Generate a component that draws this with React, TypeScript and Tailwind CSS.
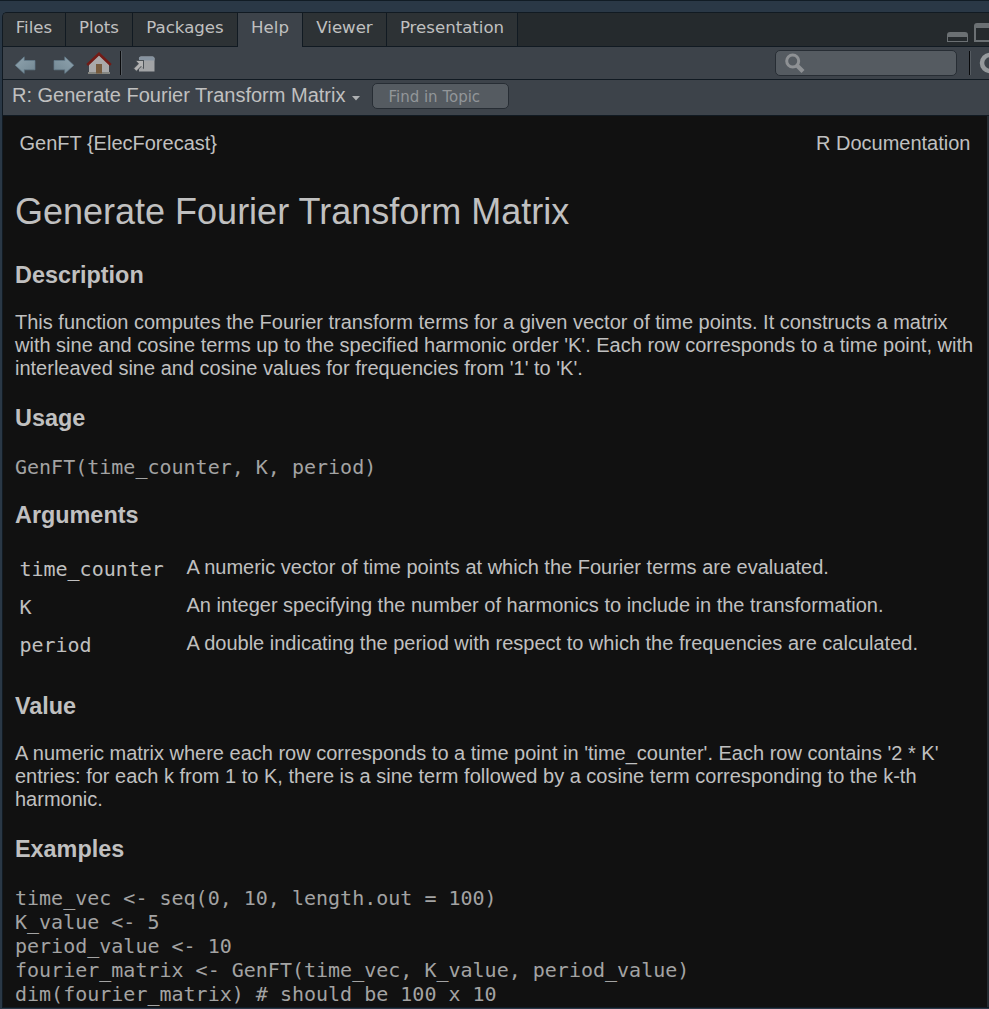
import React from 'react';

const tabs = [
  { label: 'Files', width: 'w-[63px]' },
  { label: 'Plots', width: 'w-[67px]' },
  { label: 'Packages', width: 'w-[105px]' },
  { label: 'Help', width: 'w-[65px]' },
  { label: 'Viewer', width: 'w-[84px]' },
  { label: 'Presentation', width: 'w-[131px]' },
];

const args = [
  ['time_counter', 'A numeric vector of time points at which the Fourier terms are evaluated.'],
  ['K', 'An integer specifying the number of harmonics to include in the transformation.'],
  ['period', 'A double indicating the period with respect to which the frequencies are calculated.'],
];

const example = `time_vec <- seq(0, 10, length.out = 100)
K_value <- 5
period_value <- 10
fourier_matrix <- GenFT(time_vec, K_value, period_value)
dim(fourier_matrix) # should be 100 x 10`;

function Arrow({ flip = false }: { flip?: boolean }) {
  return (
    <svg width="22" height="20" viewBox="0 0 22 20" className={flip ? '-scale-x-100' : ''}>
      <defs>
        <linearGradient id="arrowFill" x1="0" y1="0" x2="1" y2="1">
          <stop offset="0" stopColor="#8fa3ae" />
          <stop offset="1" stopColor="#728793" />
        </linearGradient>
      </defs>
      <path d="M1.2 10.3 10.2 1.8V5.5H21V14.8H10.2V18.4Z" fill="url(#arrowFill)" stroke="#647d8c" strokeWidth=".7" />
    </svg>
  );
}

function Home() {
  return (
    <svg width="26" height="24" viewBox="0 0 26 24">
      <path d="M3 13 13 4l10 9v9.5H3Z" fill="#a9a9aa" />
      <path d="M2 21h22v2H2Z" fill="#858681" />
      <path d="M10 13h6v9.5h-6Z" fill="#765b3e" />
      <path d="M1.2 14 13 2.8 24.8 14" fill="none" stroke="#721b16" strokeWidth="2.6" />
    </svg>
  );
}

function Popout() {
  return (
    <svg width="23" height="18" viewBox="0 0 23 18">
      <path d="M6 3.5q0-2 2-2h11.5q2 0 2 2v13H6Z" fill="#a2a4a6" />
      <path d="M6 5.5v-2q0-2 2-2h11.5q2 0 2 2v2Z" fill="#8794a1" />
      <path d="M2.2 5H11v9.2l-2.6-2.5-4.8 5L0 13.2l5-4.9Z" fill="#4c5257" />
      <path d="M3.4 6H10v7.2l-2-2.1-4.6 4.7-2.2-2.3L6 8.8Z" fill="#b3b3b3" />
    </svg>
  );
}

function Separator() {
  return <div className="h-6 w-[2px] border-l border-r border-l-[#08090b] border-r-[#565c62]" />;
}

function Heading({ children, className }: { children: React.ReactNode; className: string }) {
  return <h3 className={`h-[26px] text-[23.4px] leading-[26px] font-bold ${className}`}>{children}</h3>;
}

export default function App() {
  return (
    <div className="flex h-[1009px] w-[989px] flex-col overflow-hidden border-t border-[#111c25] bg-[#2a3846] pt-[11px] font-['Liberation_Sans',sans-serif] text-[#c0c0c0]">
      <div className="ml-[2px] flex h-[995px] flex-col overflow-hidden rounded-tl-[5px] border-t border-l border-[#111a22] bg-[#3d434a]">
        <div className="flex h-[34px] shrink-0 bg-[#252a2d] font-['DejaVu_Sans',sans-serif] text-[16.6px]">
          {tabs.map((t) => (
            <div
              key={t.label}
              className={`box-border flex shrink-0 justify-center border-r border-[#111a22] pt-[5px] leading-[20px] ${t.width} ${
                t.label === 'Help' ? 'bg-[#3d434a]' : 'border-b bg-[#2d3235]'
              }`}
            >
              {t.label}
            </div>
          ))}
          <div className="flex grow items-end gap-[6px] overflow-hidden border-b border-[#111a22] pb-[4px] pl-[429px]">
            <div className="h-[10px] w-[21px] shrink-0 rounded-t-[3px] border border-t-[5px] border-[#6b7073]" />
            <div className="h-[19px] w-[23px] shrink-0 rounded-t-[3px] border-2 border-t-[5px] border-[#6b7073]" />
          </div>
        </div>

        <div className="flex h-[33px] shrink-0 items-center overflow-hidden border-b border-[#111a22] pl-[11px]">
          <div className="mt-[3px]"><Arrow /></div>
          <div className="mt-[3px] ml-[17px]"><Arrow flip /></div>
          <div className="ml-[11px]"><Home /></div>
          <div className="ml-[8px]"><Separator /></div>
          <div className="ml-[11px] mt-[1px]"><Popout /></div>
          <div className="ml-[619px] flex h-[26px] w-[182px] shrink-0 items-center rounded-[5px] border border-[#272d34] bg-[#555b61] pl-[8px]">
            <svg width="22" height="22" viewBox="0 0 22 22" fill="none" stroke="#8e9194">
              <circle cx="8.7" cy="9" r="6" strokeWidth="3" />
              <path d="m13 13.5 6 6" strokeWidth="4.2" />
            </svg>
          </div>
          <div className="ml-[12px] shrink-0"><Separator /></div>
          <svg className="ml-[8px] shrink-0" width="22" height="22" viewBox="0 0 22 22">
            <circle cx="11" cy="11" r="8" fill="none" stroke="#95999c" strokeWidth="4.5" />
          </svg>
        </div>

        <div className="flex h-[36px] shrink-0 border-b border-[#111a22] pl-[9px]">
          <div className="mt-[4px] text-[20px] leading-[23px] whitespace-nowrap">R: Generate Fourier Transform Matrix</div>
          <svg className="mt-[16px] ml-[7px]" width="8" height="5" viewBox="0 0 8 5">
            <path d="M0 0h8L4 4.5Z" fill="#aeb0b2" />
          </svg>
          <div className="mt-[3px] ml-[12px] h-[26px] w-[137px] rounded-[5px] border border-[#272d34] bg-[#555b61] pl-[15px] font-['DejaVu_Sans',sans-serif] text-[15px] leading-[26px] text-[#929699]">
            Find in Topic
          </div>
        </div>

        <div className="flex min-h-0 grow">
          <main className="w-[984px] shrink-0 overflow-hidden bg-[#111] px-[12px] pt-[16px] text-[20px] leading-[23px]">
            <div className="flex justify-between pr-[4.5px] pl-[4.5px]">
              <span>{'GenFT {ElecForecast}'}</span>
              <span>R Documentation</span>
            </div>
            <h2 className="mt-[36px] h-[41px] text-[36px] leading-[41px]">Generate Fourier Transform Matrix</h2>
            <Heading className="mt-[30px]">Description</Heading>
            <p className="mt-[23px] whitespace-nowrap">
              This function computes the Fourier transform terms for a given vector of time points. It constructs a matrix<br />
              with sine and cosine terms up to the specified harmonic order 'K'. Each row corresponds to a time point, with<br />
              interleaved sine and cosine values for frequencies from '1' to 'K'.
            </p>
            <Heading className="mt-[25px]">Usage</Heading>
            <pre className="mt-[24px] h-[24px] font-['DejaVu_Sans_Mono',monospace] text-[20px] leading-[24px] text-[#a3a3a3]">GenFT(time_counter, K, period)</pre>
            <Heading className="mt-[23px]">Arguments</Heading>
            <div className="mt-[28px] grid auto-rows-[38px] grid-cols-[167px_1fr] pl-[4.4px] whitespace-nowrap">
              {args.map(([name, text]) => (
                <React.Fragment key={name}>
                  <code className="pt-[1px] font-['DejaVu_Sans_Mono',monospace] leading-[24px]">{name}</code>
                  <span>{text}</span>
                </React.Fragment>
              ))}
            </div>
            <Heading className="mt-[23px]">Value</Heading>
            <p className="mt-[23px] whitespace-nowrap">
              A numeric matrix where each row corresponds to a time point in 'time_counter'. Each row contains '2 * K'<br />
              entries: for each k from 1 to K, there is a sine term followed by a cosine term corresponding to the k-th<br />
              harmonic.
            </p>
            <Heading className="mt-[25px]">Examples</Heading>
            <pre className="mt-[24px] font-['DejaVu_Sans_Mono',monospace] text-[20px] leading-[24px] text-[#a3a3a3]">{example}</pre>
          </main>
          <div className="grow bg-[#252c32]" />
        </div>
      </div>
      <div className="ml-[2px] h-px shrink-0 bg-[#111a22]" />
    </div>
  );
}
